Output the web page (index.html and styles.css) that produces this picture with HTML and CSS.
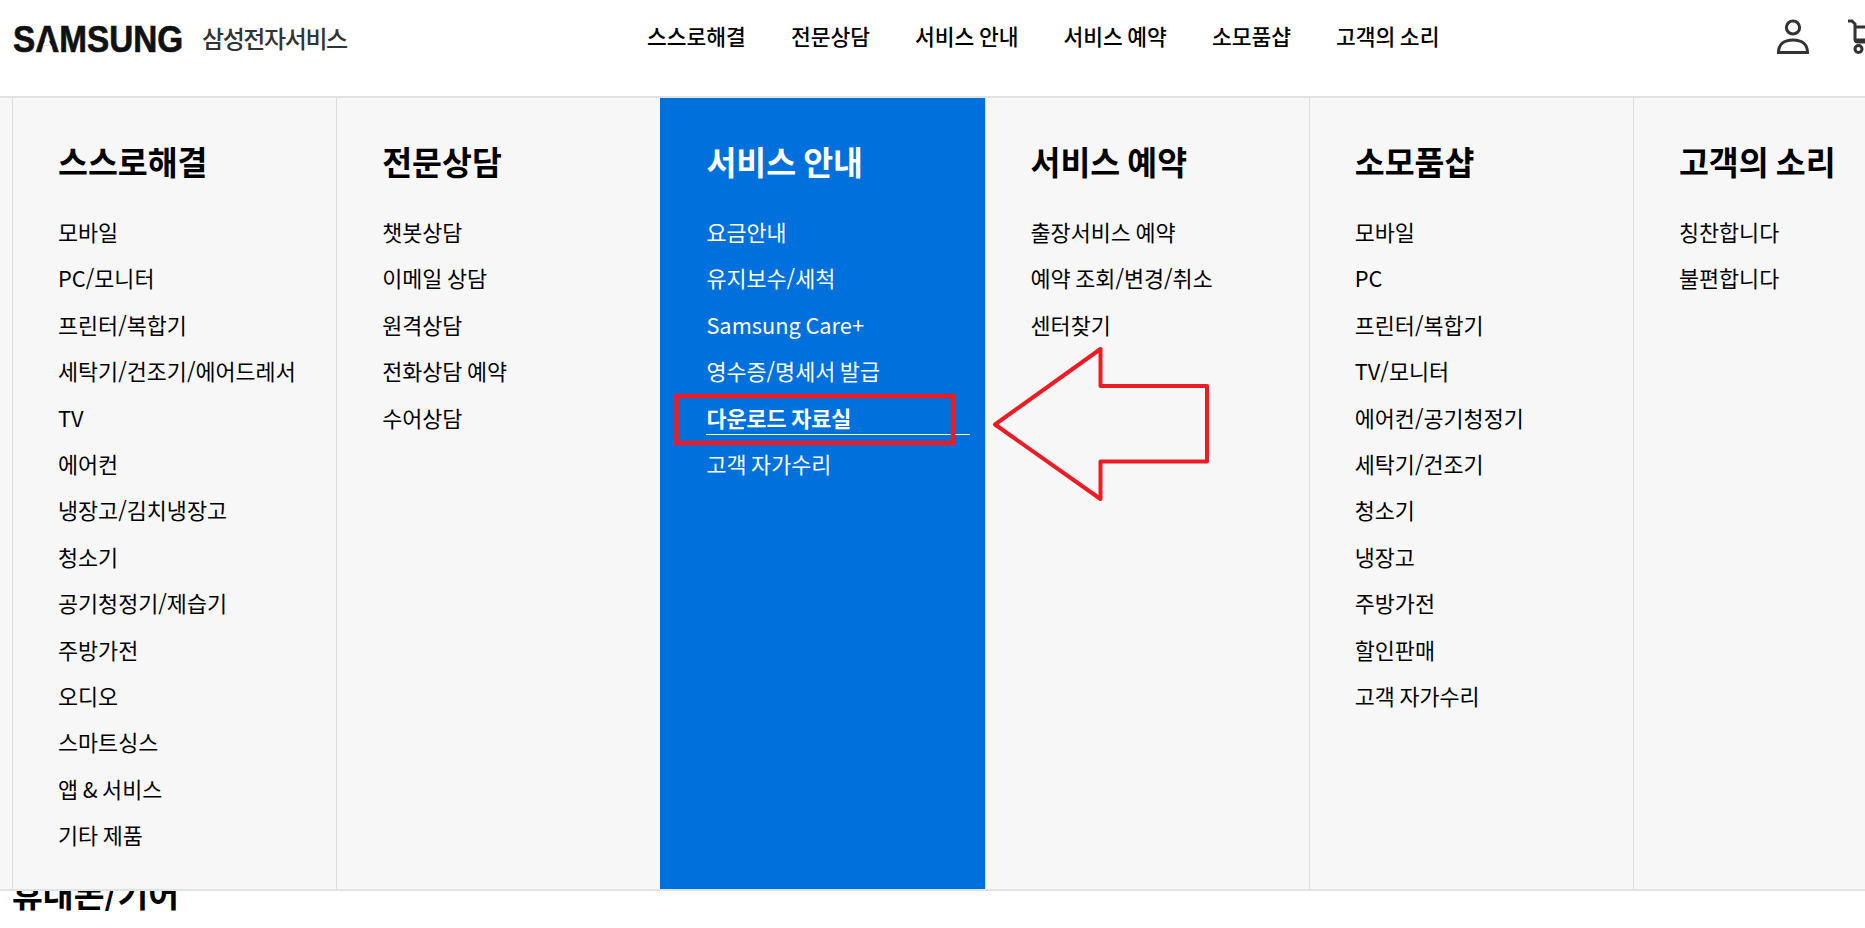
FILE: index.html
```
<!DOCTYPE html>
<html lang="ko">
<head>
<meta charset="utf-8">
<title>삼성전자서비스</title>
<link rel="stylesheet" href="styles.css">
</head>
<body>
<header class="header">
  <a class="brand">
    <svg class="wordmark" width="172" height="44" viewBox="0 0 172 44" role="img" aria-label="SAMSUNG">
      <text class="wordmark-text" transform="translate(0 34) scale(1 1.120)">SAMSUNG</text>
      <path class="wordmark-cut" d="M34 18 29.800 27.500h8.400z"/>
    </svg>
    <span class="brand-name">삼성전자서비스</span>
  </a>
  <nav class="nav">
    <a>스스로해결</a><a>전문상담</a><a>서비스 안내</a><a>서비스 예약</a><a>소모품샵</a><a>고객의 소리</a>
  </nav>
  <div class="actions">
    <svg class="icon" width="34" height="36" viewBox="0 0 34 36" aria-label="사용자">
      <circle cx="17" cy="8.500" r="6.600"/>
      <path d="M2.500 33.500c0-8 5.500-12.500 14.500-12.500s14.500 4.500 14.500 12.500z"/>
    </svg>
    <svg class="icon" width="36" height="36" viewBox="0 0 36 36" aria-label="장바구니">
      <path d="M2 2h4l3 3v15c0 2 1 3 3 3h22"/>
      <path d="M9 8h26l-3 13H9"/>
      <circle cx="12.500" cy="30" r="3.500"/>
      <circle cx="29" cy="30" r="3.500"/>
    </svg>
  </div>
</header>

<main class="content">
  <h2 class="section-title">휴대폰/기어</h2>
</main>

<section class="mega">
  <div class="mega-col">
    <h3>스스로해결</h3>
    <ul>
      <li>모바일</li><li>PC/모니터</li><li>프린터/복합기</li><li>세탁기/건조기/에어드레서</li><li>TV</li><li>에어컨</li><li>냉장고/김치냉장고</li><li>청소기</li><li>공기청정기/제습기</li><li>주방가전</li><li>오디오</li><li>스마트싱스</li><li>앱 &amp; 서비스</li><li>기타 제품</li>
    </ul>
  </div>
  <div class="mega-col">
    <h3>전문상담</h3>
    <ul>
      <li>챗봇상담</li><li>이메일 상담</li><li>원격상담</li><li>전화상담 예약</li><li>수어상담</li>
    </ul>
  </div>
  <div class="mega-col is-active">
    <h3>서비스 안내</h3>
    <ul>
      <li>요금안내</li><li>유지보수/세척</li><li>Samsung Care+</li><li>영수증/명세서 발급</li><li class="is-current">다운로드 자료실</li><li>고객 자가수리</li>
    </ul>
  </div>
  <div class="mega-col">
    <h3>서비스 예약</h3>
    <ul>
      <li>출장서비스 예약</li><li>예약 조회/변경/취소</li><li>센터찾기</li>
    </ul>
  </div>
  <div class="mega-col">
    <h3>소모품샵</h3>
    <ul>
      <li>모바일</li><li>PC</li><li>프린터/복합기</li><li>TV/모니터</li><li>에어컨/공기청정기</li><li>세탁기/건조기</li><li>청소기</li><li>냉장고</li><li>주방가전</li><li>할인판매</li><li>고객 자가수리</li>
    </ul>
  </div>
  <div class="mega-col">
    <h3>고객의 소리</h3>
    <ul>
      <li>칭찬합니다</li><li>불편합니다</li>
    </ul>
  </div>
</section>

<svg class="annotation" width="1865" height="928" viewBox="0 0 1865 928" aria-hidden="true">
  <rect class="note-box" x="676.500" y="396" width="276.500" height="47"/>
  <path class="note-arrow" d="M995 424.500 1100.500 349V386H1207V461.500H1100.500V499Z"/>
</svg>
</body>
</html>
```

FILE: styles.css
```
* { box-sizing: border-box; }
html, body { margin: 0; padding: 0; height: 928px; overflow: hidden; background: #fff; }
body {
  position: relative;
  width: 1865px;
  font-family: "Noto Sans CJK KR", "Noto Sans", sans-serif;
  color: #000;
}
ul { list-style: none; margin: 0; padding: 0; }
h2, h3 { margin: 0; }

.header {
  height: 98px;
  display: flex;
  align-items: flex-start;
  padding-left: 13px;
  border-bottom: 2px solid #e2e2e2;
  overflow: hidden;
}
.brand { display: flex; align-items: center; gap: 17px; padding-top: 18px; width: 634px; flex: none; }
.wordmark { flex: none; }
.wordmark-text {
  font-family: "Liberation Sans", Arial, sans-serif;
  font-weight: 700;
  font-size: 33.300px;
  fill: #111;
  stroke: #111;
  stroke-width: 0.6px;
}
.wordmark-cut { fill: #fff; }
.brand-name { font-size: 24px; font-weight: 500; color: #333; letter-spacing: -1.400px; line-height: 30px; margin-bottom: 4px; }

.nav { display: flex; gap: 45px; padding-top: 20px; font-size: 21.500px; font-weight: 500; line-height: 32px; white-space: nowrap; word-spacing: -1.500px; }

.actions { margin-left: auto; display: flex; gap: 36px; padding-top: 19px; margin-right: -17px; flex: none; }
.icon { fill: none; stroke: #333; stroke-width: 3; flex: none; }

.content { padding: 0 12px; }
.section-title { margin-top: 770px; font-size: 33.500px; font-weight: 700; line-height: 50px; }

.mega {
  position: absolute;
  left: 0;
  top: 98px;
  width: 1865px;
  height: 793px;
  padding-left: 12px;
  display: flex;
  background: #f7f7f7;
  border-bottom: 2px solid #e2e2e2;
}
.mega-col {
  flex: 0 0 324.200px;
  padding: 39px 15px 0 45px;
  border-left: 1px solid #dcdcdc;
}
.mega-col h3 { font-size: 32.500px; font-weight: 700; line-height: 48px; white-space: nowrap; margin-bottom: 24px; word-spacing: -2px; }
.mega-col li { height: 46.400px; font-size: 21.800px; line-height: 46.400px; white-space: nowrap; word-spacing: -1.500px; }
.mega-col.is-active { background: #0071dc; color: #fff; border-left-color: #0071dc; }
.mega-col li.is-current { font-weight: 700; position: relative; }
.mega-col li.is-current::after {
  content: "";
  position: absolute;
  left: 0; right: 0; bottom: 6px;
  height: 1px;
  background: #fff;
}

.annotation { position: absolute; left: 0; top: 0; pointer-events: none; }
.note-box { fill: none; stroke: #ed1c24; stroke-width: 4.500; }
.note-arrow { fill: none; stroke: #ed1c24; stroke-width: 4; stroke-linejoin: round; }
```
